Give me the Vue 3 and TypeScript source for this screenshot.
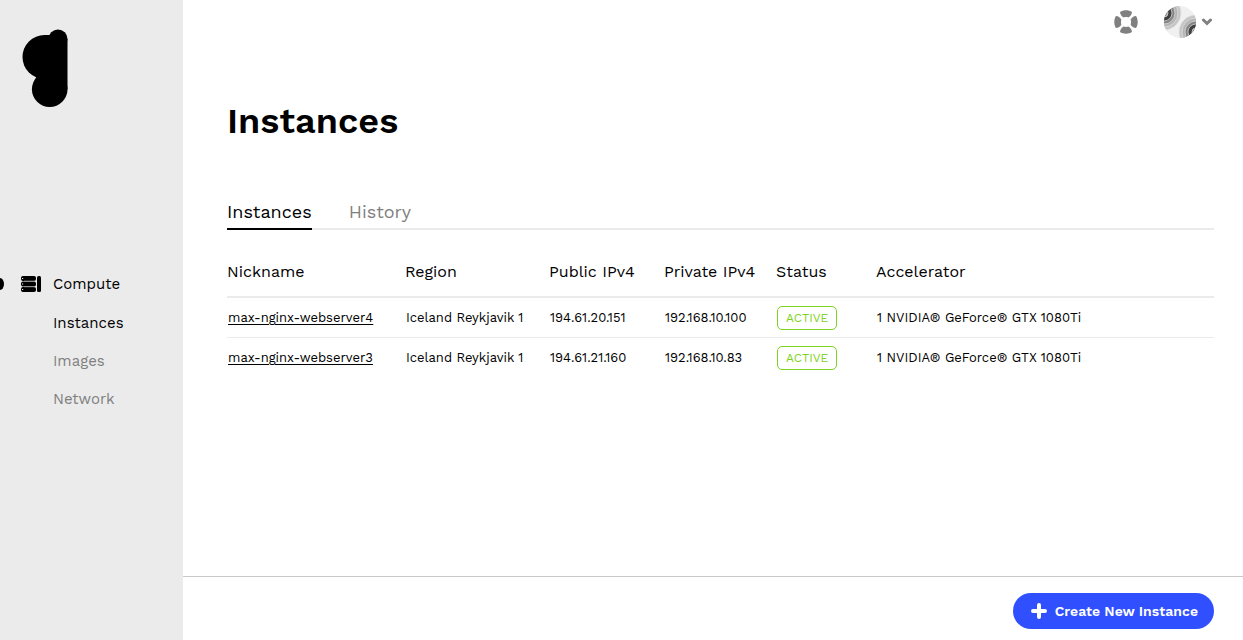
<script setup lang="ts">
import { ref } from 'vue'

interface Instance {
  nickname: string
  region: string
  publicIp: string
  privateIp: string
  status: string
  accelerator: string
}

const navItems = ['Instances', 'Images', 'Network']
const tabs = ['Instances', 'History']
const activeNav = ref('Instances')
const activeTab = ref('Instances')

const instances: Instance[] = [
  {
    nickname: 'max-nginx-webserver4',
    region: 'Iceland Reykjavik 1',
    publicIp: '194.61.20.151',
    privateIp: '192.168.10.100',
    status: 'ACTIVE',
    accelerator: '1 NVIDIA® GeForce® GTX 1080Ti',
  },
  {
    nickname: 'max-nginx-webserver3',
    region: 'Iceland Reykjavik 1',
    publicIp: '194.61.21.160',
    privateIp: '192.168.10.83',
    status: 'ACTIVE',
    accelerator: '1 NVIDIA® GeForce® GTX 1080Ti',
  },
]
const ringShades = ['#c6c6c6', '#b4b4b4', '#858585', '#404040', '#a0a0a0']
const ringRadii = [17, 14, 11, 8, 4]
</script>

<template>
  <div class="page">
    <aside class="sidebar">
      <a href="#" class="logo" aria-label="Home">
        <svg width="46" height="78" viewBox="0 0 46 78" aria-hidden="true">
          <circle cx="22.5" cy="28" r="22" />
          <circle cx="36" cy="10" r="9.5" />
          <circle cx="27.7" cy="60.2" r="17.8" />
          <path d="M22 6H36V10H45.5V60.2H27L14 49L20 30Z" />
        </svg>
      </a>
      <nav class="nav">
        <a href="#" class="nav-group">
          <svg width="20" height="16" viewBox="0 0 20 16" aria-hidden="true">
            <rect x="0" y="0" width="15" height="5" rx="2" />
            <rect x="0" y="5.5" width="15" height="5" rx="2" />
            <rect x="0" y="11" width="15" height="5" rx="2" />
            <rect x="16" y="0" width="4" height="16" rx="1.5" />
            <path class="seam" d="M3 5.2H14M3 10.7H14" />
            <path class="leds" d="M1 2.5H2.2M1 8H2.2M1 13.5H2.2" />
          </svg>
          Compute
        </a>
        <a
          v-for="item in navItems"
          :key="item"
          href="#"
          class="nav-item"
          :class="{ active: item === activeNav }"
          @click.prevent="activeNav = item"
        >{{ item }}</a>
      </nav>
    </aside>

    <div class="main">
      <header class="topbar">
        <button type="button" class="icon-button" aria-label="Support">
          <svg width="24" height="24" viewBox="0 0 24 24" aria-hidden="true">
            <g fill="#808080">
              <path
                v-for="angle in [0, 90, 180, 270]"
                :key="angle"
                :transform="`rotate(${angle} 12 12)`"
                d="M6 2C9.3 -.3 14.7 -.3 18 2C17.8 4.4 16.4 6.2 14.4 7.4C12.8 6.8 11.2 6.8 9.6 7.4C7.6 6.2 6.2 4.4 6 2Z"
              />
            </g>
          </svg>
        </button>
        <button type="button" class="icon-button account" aria-label="Account">
          <svg width="32" height="32" viewBox="0 0 32 32" aria-hidden="true">
            <defs>
              <clipPath id="avatar-clip"><circle cx="16" cy="16" r="16" /></clipPath>
            </defs>
            <g clip-path="url(#avatar-clip)">
              <rect width="32" height="32" fill="#f0f0f0" />
              <g v-for="(radius, i) in ringRadii" :key="radius">
                <circle cx="0" cy="7" :r="radius" :fill="ringShades[i]" stroke="#e4e4e4" stroke-width=".7" />
                <circle cx="32" cy="26" :r="radius" :fill="ringShades[i]" stroke="#e4e4e4" stroke-width=".7" />
              </g>
            </g>
          </svg>
          <svg width="10" height="8" viewBox="0 0 10 8" aria-hidden="true">
            <path d="M1.5 2L5 5.5L8.5 2" fill="none" stroke="#808080" stroke-width="3" stroke-linecap="round" />
          </svg>
        </button>
      </header>

      <main class="content">
        <h1>Instances</h1>
        <div class="tabs" role="tablist">
          <button
            v-for="tab in tabs"
            :key="tab"
            type="button"
            role="tab"
            class="tab"
            :class="{ active: tab === activeTab }"
            :aria-selected="tab === activeTab"
            @click="activeTab = tab"
          >{{ tab }}</button>
        </div>
        <table>
          <colgroup>
            <col class="col-nickname" />
            <col class="col-region" />
            <col class="col-public" />
            <col class="col-private" />
            <col class="col-status" />
            <col />
          </colgroup>
          <thead>
            <tr>
              <th scope="col">Nickname</th>
              <th scope="col">Region</th>
              <th scope="col">Public IPv4</th>
              <th scope="col">Private IPv4</th>
              <th scope="col">Status</th>
              <th scope="col">Accelerator</th>
            </tr>
          </thead>
          <tbody>
            <tr v-for="row in instances" :key="row.nickname">
              <td><a href="#">{{ row.nickname }}</a></td>
              <td>{{ row.region }}</td>
              <td>{{ row.publicIp }}</td>
              <td>{{ row.privateIp }}</td>
              <td><span class="badge">{{ row.status }}</span></td>
              <td>{{ row.accelerator }}</td>
            </tr>
          </tbody>
        </table>
      </main>

      <footer class="footer">
        <button type="button" class="create">
          <svg width="16" height="16" viewBox="0 0 16 16" aria-hidden="true">
            <path d="M8 2V14M2 8H14" stroke="#fff" stroke-width="4" stroke-linecap="round" />
          </svg>
          Create New Instance
        </button>
      </footer>
    </div>
  </div>
</template>

<style>
body {
  margin: 0;
}
</style>

<style scoped>
.page {
  display: flex;
  min-height: 100vh;
  background: #fff;
  color: #000;
  font-family: "Work Sans", Inter, "Liberation Sans", sans-serif;
}
button {
  border: 0;
  padding: 0;
  background: none;
  font-family: inherit;
  cursor: pointer;
}
svg {
  display: block;
  flex: none;
}
.sidebar {
  flex: 0 0 183px;
  background: #ebebeb;
}
.logo {
  display: block;
  padding: 29px 22px 0;
}
.nav {
  display: flex;
  flex-direction: column;
  margin-top: 158px;
  font-size: 15px;
  line-height: 38px;
}
.nav a {
  color: #808080;
  text-decoration: none;
}
.nav .nav-group {
  position: relative;
  display: flex;
  align-items: center;
  gap: 12px;
  margin-bottom: 1px;
  padding-left: 21px;
  color: #000;
}
.nav-group::before {
  content: "";
  position: absolute;
  left: 0;
  width: 4px;
  height: 12px;
  border-radius: 0 4px 4px 0 / 0 6px 6px 0;
  background: #000;
}
.seam {
  stroke: #999;
  stroke-width: 1;
}
.leds {
  stroke: #ebebeb;
  stroke-width: 1;
}
.nav-item {
  padding-left: 53px;
}
.nav .active {
  color: #000;
}
.main {
  display: flex;
  flex: 1;
  flex-direction: column;
  min-width: 0;
}
.topbar {
  display: flex;
  align-items: center;
  justify-content: flex-end;
  gap: 26px;
  height: 44px;
  padding-right: 31px;
}
.account {
  display: flex;
  align-items: center;
  gap: 6px;
}
.content {
  flex: 1;
  padding: 55px 29px 0 44px;
}
h1 {
  margin: 0;
  font-size: 36px;
  font-weight: 600;
  line-height: 44px;
}
.tabs {
  display: flex;
  gap: 37px;
  margin-top: 52px;
  box-shadow: inset 0 -2px #ebebeb;
}
.tab {
  border-bottom: 2px solid transparent;
  color: #808080;
  font-size: 18px;
  font-weight: 400;
  line-height: 33px;
}
.tab.active {
  border-color: #000;
  color: #000;
}
table {
  width: 100%;
  table-layout: fixed;
  border-collapse: separate;
  border-spacing: 0;
}
.col-nickname {
  width: 178px;
}
.col-region {
  width: 144px;
}
.col-public {
  width: 115px;
}
.col-private {
  width: 112px;
}
.col-status {
  width: 100px;
}
th {
  height: 48px;
  padding: 18px 0 0;
  border-bottom: 2px solid #ebebeb;
  font-size: 16px;
  font-weight: 400;
  line-height: 20px;
  text-align: left;
  vertical-align: middle;
  white-space: nowrap;
}
td {
  height: 39px;
  padding: 0 1px;
  border-bottom: 1px solid #ebebeb;
  font-size: 13px;
  font-weight: 400;
  white-space: nowrap;
}
tbody tr:last-child td {
  border-bottom-color: transparent;
}
td a {
  color: #000;
  text-underline-offset: 2px;
}
.badge {
  display: inline-block;
  padding: 0 8px;
  border: 1px solid #7ed321;
  border-radius: 5px;
  color: #7ed321;
  font-size: 12px;
  line-height: 22px;
}
.footer {
  display: flex;
  justify-content: flex-end;
  padding: 16px 29px 11px;
  border-top: 1px solid #c8c8c8;
}
.create {
  display: flex;
  align-items: center;
  gap: 8px;
  height: 36px;
  padding: 0 16px 0 18px;
  border-radius: 18px;
  background: #304ffe;
  color: #fff;
  font-size: 14px;
  font-weight: 600;
}
</style>
